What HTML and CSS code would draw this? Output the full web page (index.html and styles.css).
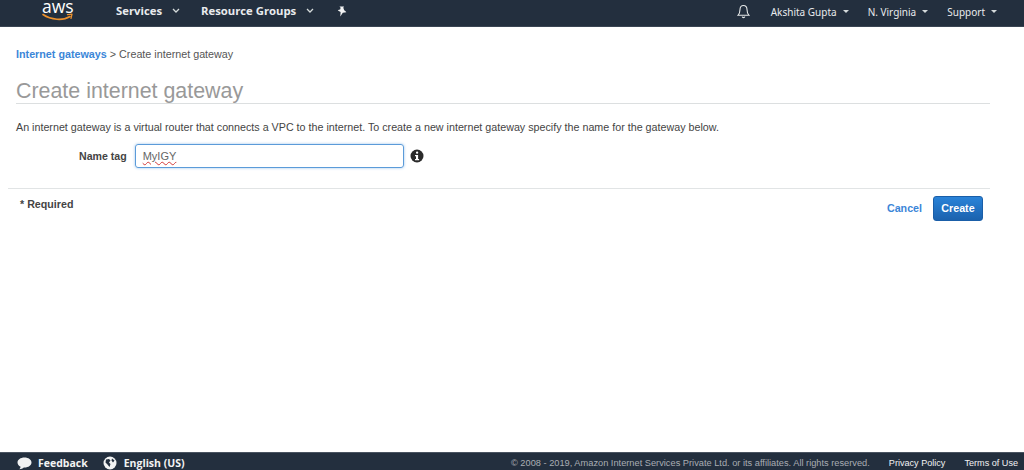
FILE: index.html
```html
<!DOCTYPE html>
<html lang="en">
<head>
<meta charset="utf-8">
<title>Create internet gateway</title>
<link rel="stylesheet" href="styles.css">
</head>
<body>
<div class="page">
  <header class="topbar">
    <div class="logo">
      <span class="logo-text">aws</span>
      <svg class="logo-smile" width="32" height="9" viewBox="0 0 32 9"><path d="M1 1.500C9 7 21 8 28 3.500" fill="none" stroke="#ec912d" stroke-width="1.600" stroke-linecap="round"/><path d="M25.500 1.600L30 1.200L29 5.400" fill="none" stroke="#ec912d" stroke-width="1.300" stroke-linecap="round" stroke-linejoin="round"/></svg>
    </div>
    <nav class="nav-left">
      <a class="nav-item">Services <svg class="chev" width="8" height="5" viewBox="0 0 8 5"><path d="M1 1l3 3 3-3" fill="none" stroke="#d5dbdb" stroke-width="1.300"/></svg></a>
      <a class="nav-item">Resource Groups <svg class="chev" width="8" height="5" viewBox="0 0 8 5"><path d="M1 1l3 3 3-3" fill="none" stroke="#d5dbdb" stroke-width="1.300"/></svg></a>
      <svg class="pin" width="10" height="11" viewBox="0 0 10 11"><path d="M2.500 0.500L7 0.500L6.300 1.800L7.200 4.300C8.200 4.800 9 5.500 9.300 6.300L5.800 6.700L3.300 10.500L3.600 6L0.800 4.500C1.300 4 2.200 3.600 3.200 3.600L3.600 1.700Z" fill="#f2f3f3"/></svg>
    </nav>
    <nav class="nav-right">
      <svg class="bell" width="13" height="15" viewBox="0 0 13 15"><path d="M6.500 1.500C4.200 1.500 3 3.200 3 5.500C3 8 2.500 9.700 1 11.300H12C10.500 9.700 10 8 10 5.500C10 3.200 8.800 1.500 6.500 1.500ZM5.200 12.700C5.500 13.900 7.500 13.900 7.800 12.700" fill="none" stroke="#e6e9e9" stroke-width="1.100"/></svg>
      <a class="menu-item">Akshita Gupta <i class="caret"></i></a>
      <a class="menu-item">N. Virginia <i class="caret"></i></a>
      <a class="menu-item">Support <i class="caret"></i></a>
    </nav>
  </header>

  <main class="content">
    <div class="head">
      <p class="crumbs"><a class="link">Internet gateways</a> &gt; Create internet gateway</p>
      <h1 class="title">Create internet gateway</h1>
      <p class="desc">An internet gateway is a virtual router that connects a VPC to the internet. To create a new internet gateway specify the name for the gateway below.</p>
      <div class="field">
        <label class="field-label">Name tag</label>
        <div class="input"><span class="typed">MyIGY</span></div>
        <svg class="info" width="14" height="14" viewBox="0 0 14 14"><circle cx="7" cy="7" r="6.500" fill="#2b2b2b"/><rect x="6" y="2.600" width="2.200" height="2.200" rx="1" fill="#fff"/><path d="M5 6h3.100v4h1v1.300H5V10h1V7.300H5z" fill="#fff"/></svg>
      </div>
    </div>
    <div class="actions">
      <span class="required">* Required</span>
      <div class="buttons">
        <a class="cancel">Cancel</a>
        <button class="create">Create</button>
      </div>
    </div>
  </main>

  <footer class="footer">
    <div class="foot-left">
      <span class="foot-item feedback"><svg width="15" height="13" viewBox="0 0 15 13"><path d="M7.500 0.500C3.500 0.500 0.500 2.700 0.500 5.500C0.500 7.300 1.800 8.800 3.600 9.700C3.400 10.700 3 11.500 2.300 12.300C4.200 12.100 5.700 11.500 6.800 10.500H7.500C11.500 10.500 14.500 8.300 14.500 5.500S11.500 0.500 7.500 0.500Z" fill="#f2f3f3"/></svg>Feedback</span>
      <span class="foot-item"><svg width="14" height="14" viewBox="0 0 14 14"><circle cx="7" cy="7" r="6.500" fill="#f2f3f3"/><path d="M3 3.500L6 3L7.500 4.500L6 6.500L7.500 8L6.500 11L4.500 8.500L2.500 6.500ZM9 2.500L11.500 4.500L10 6.500L8.500 4.500Z" fill="#232f3e"/></svg>English (US)</span>
    </div>
    <div class="foot-right">
      <span class="copy">© 2008 - 2019, Amazon Internet Services Private Ltd. or its affiliates. All rights reserved.</span>
      <a class="foot-link">Privacy Policy</a>
      <a class="foot-link">Terms of Use</a>
    </div>
  </footer>
</div>
</body>
</html>
```

FILE: styles.css
```css
* { box-sizing: border-box; }
html, body { margin: 0; padding: 0; height: 100%; background: #fff; }
body { font-family: "Liberation Sans", Arial, sans-serif; overflow: hidden; }
.page { display: flex; flex-direction: column; height: 470px; }

.topbar {
  height: 27px; flex: none; display: flex; align-items: flex-start;
  background: #232f3e; border-bottom: 1px solid #3a4553; color: #f2f3f3;
  padding-left: 42px; padding-right: 27px;
}
.logo { width: 74px; height: 26px; position: relative; flex: none; }
.logo-text {
  display: block; font: 400 17.500px/12px "Open Sans", sans-serif; color: #fff;
}
.logo-smile { position: absolute; left: 0; top: 13px; }
.nav-left { display: flex; align-items: center; gap: 21px; height: 22px; }
.nav-item {
  font: 700 11.300px/1 "Open Sans", sans-serif; color: #e9ebed;
  display: flex; align-items: center; gap: 10px;
}
.pin { margin-left: 2px; }
.nav-right { margin-left: auto; display: flex; align-items: center; gap: 19px; height: 23px; }
.bell { margin-right: 2px; }
.menu-item {
  font: 400 10px/1 "Noto Sans", sans-serif; color: #e9ebed;
  display: flex; align-items: center; gap: 6px;
}
.caret {
  width: 0; height: 0; border-left: 3px solid transparent; border-right: 3px solid transparent;
  border-top: 3px solid #d5dbdb;
}

.content { flex: 1; padding: 0 34px 0 8px; }
.head { padding-left: 8px; border-bottom: 1px solid #e1e4e5; height: 162px; }
.crumbs { margin: 0; padding-top: 21px; font-size: 10.750px; line-height: 12px; color: #555; }
.link { color: #3b86d8; font-weight: 700; }
.title {
  margin: 17px 0 0; font-size: 21.400px; line-height: 28px; font-weight: 400; color: #999;
  border-bottom: 1px solid #dcdfe0; height: 27px;
}
.desc { margin: 16px 0 0; font-size: 10.720px; line-height: 14px; color: #444; }
.field { display: flex; align-items: center; margin-top: 10px; padding-left: 63px; }
.field-label { font-size: 10.600px; font-weight: 700; color: #444; margin-right: 8px; }
.input {
  width: 269px; height: 24px; border: 1px solid #5b9bd9; border-radius: 3px;
  box-shadow: 0 0 3px #9dc4ea; padding-left: 7px;
  font-size: 11px; line-height: 22px; color: #666;
}
.typed { text-decoration: underline wavy #d23b3b 1px; text-underline-offset: 1px; }
.info { margin-left: 6px; }

.actions { display: flex; justify-content: space-between; padding: 7px 7px 0 12px; }
.required { font-size: 10.700px; font-weight: 700; color: #444; margin-top: 2px; }
.buttons { display: flex; align-items: center; gap: 11px; }
.cancel { font-size: 10.700px; font-weight: 700; color: #3b86d8; margin-bottom: 2px; }
.create {
  width: 50px; height: 25px; border: 1px solid #1a5ea8; border-radius: 3px; padding: 0 0 2px;
  background: linear-gradient(#2a83d8, #1b62ae); color: #fff;
  font: 700 10.700px "Liberation Sans", sans-serif;
}

.footer {
  height: 18px; flex: none; display: flex; align-items: center; justify-content: space-between;
  background: #232f3e; border-top: 1px solid #4a5461; padding: 3px 6px 0 17px;
}
.foot-left { display: flex; align-items: center; gap: 15px; }
.foot-item {
  display: flex; align-items: center; gap: 7px;
  font: 700 10.500px/1 "Open Sans", sans-serif; color: #f2f3f3;
}
.feedback { gap: 6px; }
.foot-right { display: flex; align-items: center; gap: 19px; font-size: 9.250px; }
.copy { color: #a9adb3; }
.foot-link { color: #f2f3f3; font-size: 9.100px; }
```
